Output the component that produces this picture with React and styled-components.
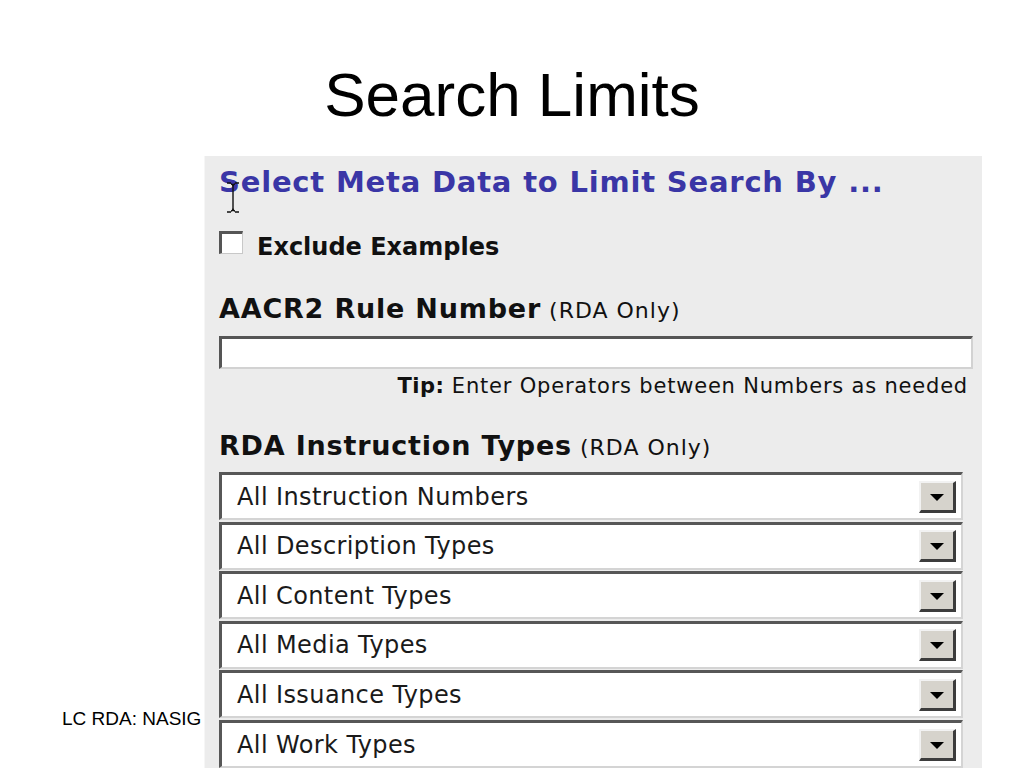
import React from "react";
import styled, { createGlobalStyle } from "styled-components";

const GlobalStyle = createGlobalStyle`
  html, body {
    margin: 0;
    padding: 0;
    background: #ffffff;
  }
`;

const Slide = styled.div`
  width: 1024px;
  height: 768px;
  overflow: hidden;
  background: #ffffff;
  display: flex;
  flex-direction: column;
`;

const Title = styled.h1`
  box-sizing: border-box;
  height: 156px;
  margin: 0;
  padding-top: 64px;
  text-align: center;
  font: 400 62px/62px "Liberation Sans", Arial, sans-serif;
  color: #000;
`;

const Body = styled.div`
  display: flex;
  flex: 1;
  min-height: 0;
`;

const FooterCol = styled.div`
  box-sizing: border-box;
  width: 204px;
  flex-shrink: 0;
  padding: 552px 0 0 62px;
  white-space: nowrap;
  font: 400 19px/22px "Liberation Sans", Arial, sans-serif;
  color: #000;
`;

const Panel = styled.div`
  position: relative;
  box-sizing: border-box;
  width: 778px;
  flex-shrink: 0;
  padding: 10px 10px 0 14px;
  background: #ececec;
  border-left: 1px solid #f6f6f6;
  font-family: "DejaVu Sans", Verdana, sans-serif;
  display: flex;
  flex-direction: column;
`;

const Heading = styled.div`
  font-size: 29px;
  line-height: 32px;
  font-weight: 700;
  letter-spacing: 0.8px;
  color: #3a36a6;
  white-space: nowrap;
`;

const Cursor = styled.svg`
  position: absolute;
  left: 20px;
  top: 26px;
`;

const CheckRow = styled.label`
  display: flex;
  align-items: flex-start;
  gap: 14px;
  margin-top: 33px;
`;

const Box = styled.span`
  box-sizing: border-box;
  width: 24px;
  height: 23px;
  background: #ffffff;
  border-top: 3px solid #555;
  border-left: 3px solid #555;
  border-right: 1px solid #c8c8c8;
  border-bottom: 1px solid #c8c8c8;
`;

const CheckText = styled.span`
  margin-top: 3px;
  font-size: 24px;
  line-height: 26px;
  font-weight: 700;
  color: #111;
`;

const SectionHead = styled.div`
  margin-top: ${(p) => p.$top}px;
  font-size: 27px;
  line-height: 30px;
  font-weight: 700;
  letter-spacing: 0.8px;
  color: #111;
  white-space: nowrap;
`;

const Note = styled.span`
  font-size: 22px;
  font-weight: 400;
  letter-spacing: 1px;
  margin-left: 8px;
`;

const TextInput = styled.div`
  box-sizing: border-box;
  margin-top: 10px;
  width: 754px;
  height: 34px;
  background: #ffffff;
  border-top: 3px solid #555;
  border-left: 3px solid #555;
  border-right: 2px solid #d2d2d2;
  border-bottom: 2px solid #d2d2d2;
`;

const Tip = styled.div`
  width: 749px;
  margin-top: 5px;
  text-align: right;
  font-size: 21px;
  line-height: 24px;
  letter-spacing: 0.8px;
  color: #111;
  white-space: nowrap;
  b {
    font-weight: 700;
    letter-spacing: 0.5px;
  }
`;

const SelectList = styled.div`
  display: flex;
  flex-direction: column;
  gap: 1.6px;
  margin-top: 9px;
`;

const Select = styled.div`
  box-sizing: border-box;
  width: 744px;
  height: 48px;
  display: flex;
  align-items: center;
  justify-content: space-between;
  padding: 0 5px 0 15px;
  background: #ffffff;
  border-top: 3px solid #575757;
  border-left: 3px solid #575757;
  border-right: 2px solid #d4d4d4;
  border-bottom: 2px solid #d4d4d4;
`;

const SelectText = styled.span`
  font-size: 24px;
  line-height: 28px;
  letter-spacing: 0.4px;
  color: #1a1a1a;
`;

const DropButton = styled.span`
  box-sizing: border-box;
  width: 37px;
  height: 32px;
  display: flex;
  align-items: center;
  justify-content: center;
  padding-top: 2px;
  background: #d6d3cc;
  border-top: 2px solid #f2f2f2;
  border-left: 2px solid #f2f2f2;
  border-right: 3px solid #3c3c3c;
  border-bottom: 3px solid #3c3c3c;
`;

const Arrow = styled.span`
  width: 0;
  height: 0;
  border-left: 7px solid transparent;
  border-right: 7px solid transparent;
  border-top: 7px solid #000;
`;

const types = [
  "All Instruction Numbers",
  "All Description Types",
  "All Content Types",
  "All Media Types",
  "All Issuance Types",
  "All Work Types",
];

export default function App() {
  return (
    <Slide>
      <GlobalStyle />
      <Title>Search Limits</Title>
      <Body>
        <FooterCol>LC RDA: NASIG</FooterCol>
        <Panel>
          <Heading>Select Meta Data to Limit Search By ...</Heading>
          <Cursor width="16" height="32" viewBox="0 0 16 32">
            <path
              d="M2 1h4M10 1h4M6 2q2 0 2 3v21q0 3 -2 3M10 2q-2 0 -2 3v21q0 3 2 3M2 30h4M10 30h4"
              stroke="#111"
              strokeWidth="1.4"
              fill="none"
            />
          </Cursor>
          <CheckRow>
            <Box />
            <CheckText>Exclude Examples</CheckText>
          </CheckRow>
          <SectionHead $top={34}>
            AACR2 Rule Number<Note>(RDA Only)</Note>
          </SectionHead>
          <TextInput />
          <Tip>
            <b>Tip:</b> Enter Operators between Numbers as needed
          </Tip>
          <SectionHead $top={33}>
            RDA Instruction Types<Note>(RDA Only)</Note>
          </SectionHead>
          <SelectList>
            {types.map((t) => (
              <Select key={t}>
                <SelectText>{t}</SelectText>
                <DropButton>
                  <Arrow />
                </DropButton>
              </Select>
            ))}
          </SelectList>
        </Panel>
      </Body>
    </Slide>
  );
}
